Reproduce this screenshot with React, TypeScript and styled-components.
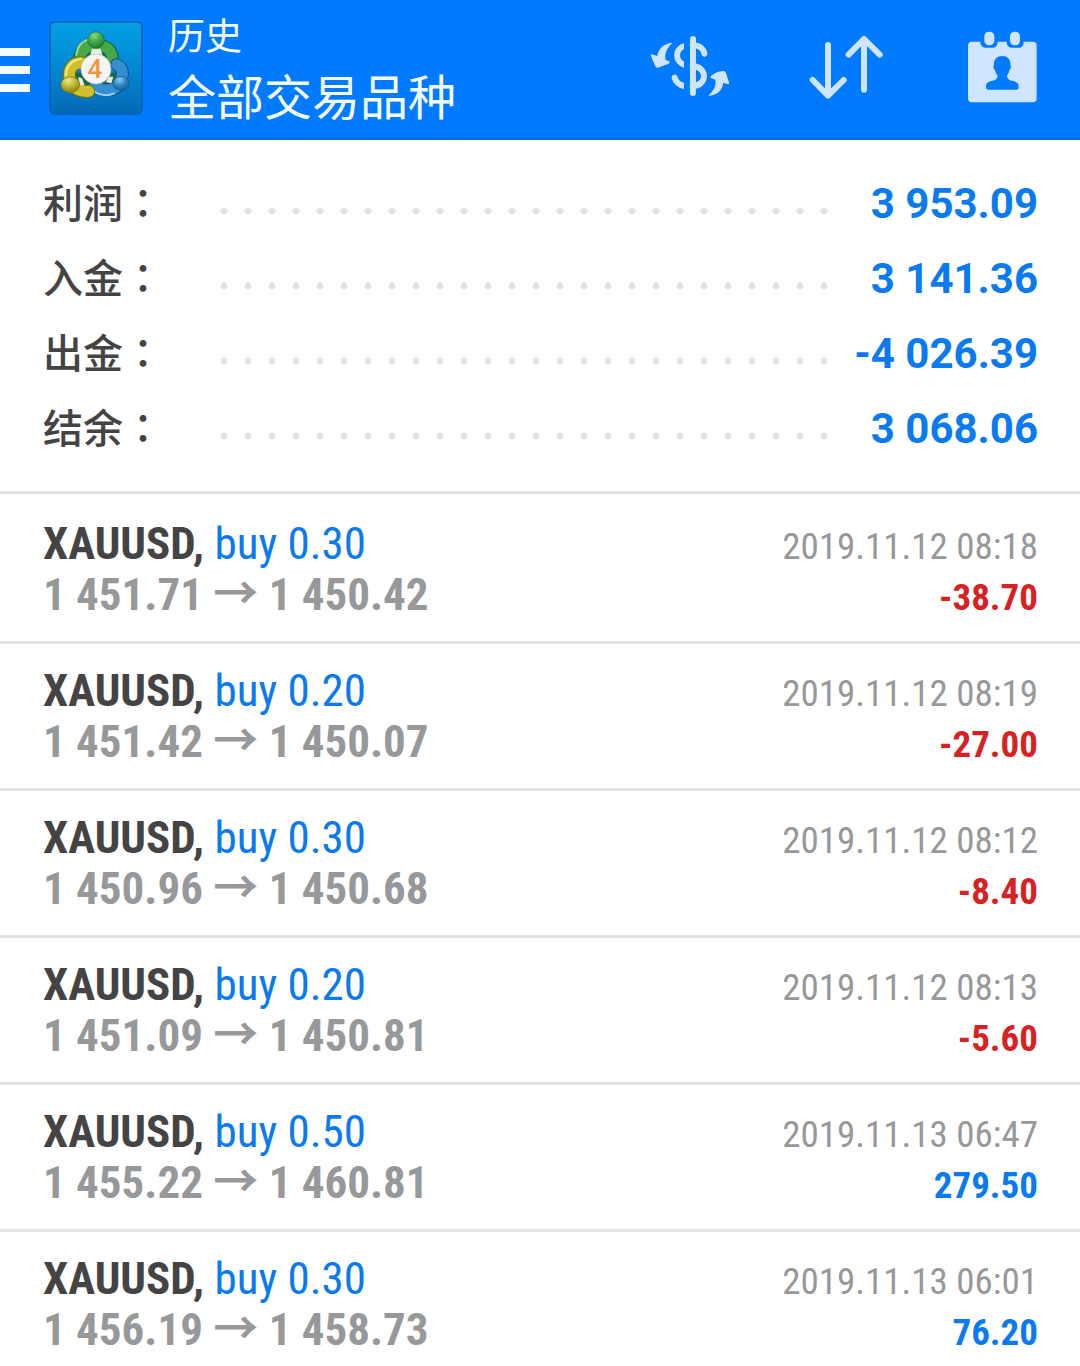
import React from "react";
import styled, { createGlobalStyle } from "styled-components";

const color = {
  bar: "#007aff",
  barEdge: "#0a6ad8",
  barIcon: "#cfe5ff",
  accent: "#0a7af0",
  loss: "#d62222",
  ink: "#444444",
  muted: "#97989a",
  rule: "#e3e3e3",
  dot: "#e2e2e2",
};

const GlobalStyle = createGlobalStyle`
  * { box-sizing: border-box; }
  body {
    margin: 0;
    background: #ffffff;
    font-family: Roboto, "Noto Sans CJK SC", sans-serif;
  }
`;

const Header = styled.header`
  display: flex;
  align-items: center;
  height: 140px;
  padding: 0 38px 2px 0;
  background: ${color.bar};
  border-bottom: 2px solid ${color.barEdge};
`;

const IconButton = styled.button`
  display: block;
  flex: none;
  padding: 0;
  border: 0;
  background: none;
  color: ${color.barIcon};
  cursor: pointer;

  svg { display: block; }
`;

const Logo = styled.svg`
  flex: none;
  margin: 0 25px 0 19px;
`;

const Titles = styled.div`
  flex: 1;
  min-width: 0;
  color: #f4fcff;
  font-family: "Noto Sans CJK SC", sans-serif;
  white-space: nowrap;
`;

const Section = styled.div`
  font-size: 37px;
  line-height: 52px;
`;

const Title = styled.h1`
  margin: 0;
  font-size: 48px;
  font-weight: 400;
  line-height: 68px;
`;

const Actions = styled.div`
  display: flex;
  gap: 76px;
`;

const Summary = styled.dl`
  margin: 0;
  padding: 26px 42px 25px 43px;
  border-bottom: 3px solid ${color.rule};
`;

const SummaryRow = styled.div`
  display: grid;
  grid-template-columns: 169px 1fr 202px;
  align-items: center;
  height: 75px;
`;

const Label = styled.dt`
  padding-bottom: 6px;
  color: ${color.ink};
  font-family: "Noto Sans CJK SC", sans-serif;
  font-size: 40px;
  font-weight: 500;
  line-height: 60px;
`;

const Colon = styled.span`
  font-family: "Noto Sans CJK TC", sans-serif;
`;

const Leader = styled.div`
  height: 8px;
  margin-top: 14px;
  background: radial-gradient(circle, ${color.dot} 3px, transparent 4px) 0 0 / 24px 8px repeat-x;
`;

const Total = styled.dd`
  margin: 0;
  color: ${color.accent};
  font-size: 42px;
  font-weight: 700;
  text-align: right;
`;

const Deals = styled.ul`
  margin: 0;
  padding: 3px 0 0;
  list-style: none;
`;

const Deal = styled.li`
  padding: 21px 42px 21px 43px;
  border-bottom: 3px solid ${color.rule};
  font-family: "Roboto Condensed", "Liberation Sans Narrow", Roboto, "Noto Sans CJK SC", sans-serif;

  &:last-child {
    padding-bottom: 0;
    border-bottom: 0;
  }
`;

const Line = styled.div`
  display: flex;
  align-items: baseline;
  justify-content: space-between;
  white-space: nowrap;
`;

const Instrument = styled.div`
  color: ${color.accent};
  font-size: 45px;
  line-height: 51px;
`;

const Symbol = styled.b`
  color: ${color.ink};
`;

const Prices = styled.div`
  color: ${color.muted};
  font-size: 45px;
  font-weight: 700;
  line-height: 51px;
`;

const Arrow = styled.span`
  font-family: "Noto Sans CJK SC", sans-serif;
  line-height: 0;
`;

const Time = styled.time`
  color: ${color.muted};
  font-size: 37px;
  line-height: 40px;
`;

const Profit = styled.div<{ $loss: boolean }>`
  color: ${(p) => (p.$loss ? color.loss : color.accent)};
  font-size: 37px;
  font-weight: 700;
  line-height: 40px;
`;

const totals = [
  { label: "利润", value: "3 953.09" },
  { label: "入金", value: "3 141.36" },
  { label: "出金", value: "-4 026.39" },
  { label: "结余", value: "3 068.06" },
];

const deals = [
  { lots: "0.30", open: "1 451.71", close: "1 450.42", time: "2019.11.12 08:18", profit: "-38.70" },
  { lots: "0.20", open: "1 451.42", close: "1 450.07", time: "2019.11.12 08:19", profit: "-27.00" },
  { lots: "0.30", open: "1 450.96", close: "1 450.68", time: "2019.11.12 08:12", profit: "-8.40" },
  { lots: "0.20", open: "1 451.09", close: "1 450.81", time: "2019.11.12 08:13", profit: "-5.60" },
  { lots: "0.50", open: "1 455.22", close: "1 460.81", time: "2019.11.13 06:47", profit: "279.50" },
  { lots: "0.30", open: "1 456.19", close: "1 458.73", time: "2019.11.13 06:01", profit: "76.20" },
];

const MenuIcon = () => (
  <svg width="30" height="48" viewBox="0 0 30 48" fill="#f4fcff" aria-hidden="true">
    <path d="M0 4h30v8H0zM0 22h30v8H0zM0 40h30v8H0z" />
  </svg>
);

const AppLogo = () => (
  <Logo width="94" height="94" viewBox="147 63 282 282" aria-hidden="true">
    <defs>
      <linearGradient id="tile" x1="0" y1="0" x2="0" y2="1">
        <stop offset="0" stopColor="#04a0e4" />
        <stop offset="0.5" stopColor="#0488d2" />
        <stop offset="1" stopColor="#0568b4" />
      </linearGradient>
      <radialGradient id="green" cx="0.4" cy="0.25" r="0.8">
        <stop offset="0" stopColor="#8fd47c" />
        <stop offset="0.5" stopColor="#3fa648" />
        <stop offset="1" stopColor="#1c7430" />
      </radialGradient>
      <radialGradient id="yellow" cx="0.4" cy="0.25" r="0.8">
        <stop offset="0" stopColor="#efe890" />
        <stop offset="0.5" stopColor="#c0b32c" />
        <stop offset="1" stopColor="#857d14" />
      </radialGradient>
      <radialGradient id="blue" cx="0.4" cy="0.25" r="0.8">
        <stop offset="0" stopColor="#8cccf0" />
        <stop offset="0.5" stopColor="#3088c6" />
        <stop offset="1" stopColor="#125a9c" />
      </radialGradient>
    </defs>
    <rect x="150" y="66" width="276" height="276" rx="14" fill="url(#tile)" stroke="#0660b4" strokeWidth="5" />
    <path d="M256 136h64l20 60h-100zM205 218h60l25 55h-60zM320 218h50l-12 46h-60z" fill="#1d6848" />
    <g fill="none" strokeLinecap="round">
      <path d="M240 180C236 122 342 120 336 178" stroke="#155f38" strokeWidth="39" />
      <path d="M240 180C236 122 342 120 336 178" stroke="#46a84a" strokeWidth="33" />
      <path d="M229 164C234 126 262 116 286 117" stroke="#a8dc83" strokeWidth="6" />
      <path d="M350 194C378 206 366 236 355 256C336 276 304 274 286 256" stroke="#0d4f8c" strokeWidth="39" />
      <path d="M350 194C378 206 366 236 355 256C336 276 304 274 286 256" stroke="#358fce" strokeWidth="33" />
      <path d="M276 268C292 286 322 290 342 280" stroke="#97d4f4" strokeWidth="6" />
      <path d="M244 188C216 188 204 208 209 238C216 266 240 276 266 274" stroke="#75700f" strokeWidth="39" />
      <path d="M244 188C216 188 204 208 209 238C216 266 240 276 266 274" stroke="#d0c12c" strokeWidth="33" />
      <path d="M242 177C213 180 198 202 198 226" stroke="#f4ed80" strokeWidth="6" />
    </g>
    <path d="M276 146h26l5 18h-36zM234 232l12 3 8 22-14-2zM340 230l-14 0-8 16 16 4z" fill="#e4f2df" />
    <circle cx="288" cy="120" r="25" fill="url(#green)" stroke="#1b6835" strokeWidth="2" />
    <ellipse cx="211" cy="254" rx="28" ry="24" fill="url(#yellow)" stroke="#807814" strokeWidth="2" />
    <ellipse cx="363" cy="250" rx="24" ry="21" fill="url(#blue)" stroke="#10538f" strokeWidth="2" />
    <circle cx="288" cy="207" r="45" fill="#f7f5f3" stroke="#b8c4bc" strokeWidth="2" />
    <text x="285" y="233" textAnchor="middle" fontFamily="Roboto, sans-serif" fontSize="78" fontWeight="500" fill="#f0953c">4</text>
  </Logo>
);

const CurrencyIcon = () => (
  <svg width="80" height="80" viewBox="60 24 240 240" fill="none" stroke="currentColor" aria-hidden="true">
    <defs>
      <clipPath id="dollarLeft">
        <rect x="60" y="24" width="102" height="240" />
      </clipPath>
    </defs>
    <path d="M189 57V219" strokeWidth="18" strokeLinecap="round" />
    <g strokeWidth="18" strokeLinecap="round">
      <path d="M188 76C208 76 221 86 223 101" />
      <path d="M188 138C233 141 233 196 188 198" />
      <g clipPath="url(#dollarLeft)">
        <path d="M172 76C132 82 130 128 172 138" />
        <path d="M134 173C138 188 150 197 172 200" />
      </g>
    </g>
    <g fill="currentColor" stroke="none">
      <path d="M126 68C100 71 85 86 82 108L65 103Q61 104 63 109L76 139Q78 144 83 143L116 131Q122 127 117 124L107 120C103 102 111 84 126 70Z" />
      <path d="M235 227C260 226 277 212 280 188L294 193Q299 193 297 187L287 157Q285 152 280 153C264 154 252 160 243 168Q239 173 244 175L256 179C259 197 251 212 235 227Z" />
    </g>
  </svg>
);

const SortIcon = () => (
  <svg
    width="80"
    height="80"
    viewBox="528 24 240 240"
    fill="none"
    stroke="currentColor"
    strokeWidth="18"
    strokeLinecap="round"
    strokeLinejoin="round"
    aria-hidden="true"
  >
    <path d="M594 75V226M548 180L594 227L641 180" />
    <path d="M702 209V58M656 104L702 57L749 104" />
  </svg>
);

const CalendarIcon = () => (
  <svg width="80" height="80" viewBox="66 39 240 240" aria-hidden="true">
    <path
      fill="currentColor"
      d="M96 80H121C121 92 130 98 138 98H157C166 98 173 92 173 80H200C200 92 208 98 217 98H236C245 98 251 92 251 80H278Q290 80 290 92V250Q290 262 278 262H96Q84 262 84 250V92Q84 80 96 80Z"
    />
    <rect x="133" y="50" width="30" height="41" rx="14" fill="currentColor" />
    <rect x="210" y="50" width="30" height="41" rx="14" fill="currentColor" />
    <path
      fill={color.bar}
      d="M187 123C203 123 213 135 211 150C214 153 213 162 208 165C207 174 203 178 201 182C202 193 209 196 220 198C232 201 236 206 236 216Q236 224 229 224H145Q138 224 138 216C138 206 142 201 154 198C166 196 171 193 173 182C170 178 166 173 165 165C160 162 159 153 162 150C160 135 171 123 187 123Z"
    />
  </svg>
);

export default function App() {
  return (
    <>
      <GlobalStyle />
      <Header>
        <IconButton type="button" aria-label="菜单">
          <MenuIcon />
        </IconButton>
        <AppLogo />
        <Titles>
          <Section>历史</Section>
          <Title>全部交易品种</Title>
        </Titles>
        <Actions>
          <IconButton type="button" aria-label="交易品种">
            <CurrencyIcon />
          </IconButton>
          <IconButton type="button" aria-label="排序">
            <SortIcon />
          </IconButton>
          <IconButton type="button" aria-label="日期">
            <CalendarIcon />
          </IconButton>
        </Actions>
      </Header>
      <main>
        <Summary>
          {totals.map((t) => (
            <SummaryRow key={t.label}>
              <Label>
                {t.label}
                <Colon>：</Colon>
              </Label>
              <Leader />
              <Total>{t.value}</Total>
            </SummaryRow>
          ))}
        </Summary>
        <Deals>
          {deals.map((d) => (
            <Deal key={d.time}>
              <Line>
                <Instrument>
                  <Symbol>XAUUSD,</Symbol> buy {d.lots}
                </Instrument>
                <Time>{d.time}</Time>
              </Line>
              <Line>
                <Prices>
                  {d.open} <Arrow>→</Arrow> {d.close}
                </Prices>
                <Profit $loss={d.profit.startsWith("-")}>{d.profit}</Profit>
              </Line>
            </Deal>
          ))}
        </Deals>
      </main>
    </>
  );
}
